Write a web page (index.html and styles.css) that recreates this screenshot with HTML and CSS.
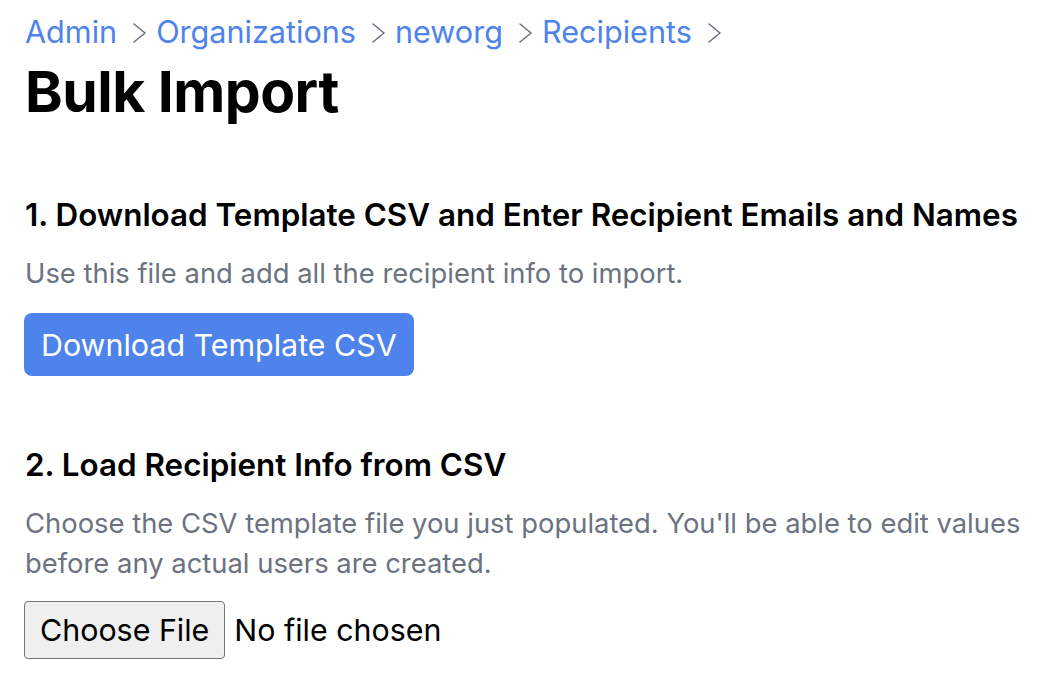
FILE: index.html
```html
<!DOCTYPE html>
<html lang="en">
<head>
<meta charset="utf-8">
<title>Bulk Import</title>
<link rel="stylesheet" href="styles.css">
</head>
<body>
<main class="page">
  <nav class="crumbs">
    <a href="#" class="crumb">Admin</a>
    <svg class="chev" viewBox="0 0 13 20" width="13" height="20"><path d="M1 1 L12 10 L1 19" /></svg>
    <a href="#" class="crumb">Organizations</a>
    <svg class="chev" viewBox="0 0 13 20" width="13" height="20"><path d="M1 1 L12 10 L1 19" /></svg>
    <a href="#" class="crumb">neworg</a>
    <svg class="chev" viewBox="0 0 13 20" width="13" height="20"><path d="M1 1 L12 10 L1 19" /></svg>
    <a href="#" class="crumb">Recipients</a>
    <svg class="chev" viewBox="0 0 13 20" width="13" height="20"><path d="M1 1 L12 10 L1 19" /></svg>
  </nav>
  <h1 class="title">Bulk Import</h1>

  <section class="step">
    <h2 class="step-title">1. Download Template CSV and Enter Recipient Emails and Names</h2>
    <p class="step-text">Use this file and add all the recipient info to import.</p>
    <button class="btn-primary" type="button">Download Template CSV</button>
  </section>

  <section class="step">
    <h2 class="step-title">2. Load Recipient Info from CSV</h2>
    <p class="step-text">Choose the CSV template file you just populated. You'll be able to edit values before any actual users are created.</p>
    <div class="file-row">
      <span class="file-btn">Choose File</span>
      <span class="file-name">No file chosen</span>
    </div>
  </section>
</main>
</body>
</html>
```
FILE: styles.css
```css
* { box-sizing: border-box; }
html, body { margin: 0; padding: 0; background: #ffffff; }
body {
  font-family: Inter, "Noto Sans", "Liberation Sans", sans-serif;
  color: #000;
}
.page {
  padding: 12px 24px 0 25px;
  display: flex;
  flex-direction: column;
}
.crumbs {
  display: flex;
  align-items: center;
  font-size: 30.6px;
  line-height: 40px;
}
.crumb {
  color: #4f83ec;
  text-decoration: none;
}
.chev {
  margin: 2px 10px 0 16px;
  fill: none;
  stroke: #6b7280;
  stroke-width: 1.6;
  stroke-linecap: round;
  stroke-linejoin: round;
}
.title {
  margin: 4px 0 0;
  font-size: 57px;
  line-height: 72px;
  font-weight: 700;
  letter-spacing: -0.5px;
}
.step {
  display: flex;
  flex-direction: column;
  align-items: flex-start;
}
.step:first-of-type { margin-top: 67px; }
.step + .step { margin-top: 69px; }
.step-title {
  margin: 0;
  font-size: 31.4px;
  line-height: 40px;
  font-weight: 600;
}
.step-text {
  margin: 18px 0 0;
  font-size: 27.4px;
  line-height: 40px;
  color: #6b7280;
  max-width: 1000px;
}
.btn-primary {
  margin-top: 20px;
  margin-left: -1px;
  height: 63px;
  padding: 0 17px;
  border: none;
  border-radius: 8px;
  background: #4f83ec;
  color: #fff;
  font-family: inherit;
  font-size: 30.4px;
}
.file-row {
  margin-top: 18px;
  margin-left: -1px;
  display: flex;
  align-items: center;
  font-size: 30.4px;
}
.file-btn {
  height: 58px;
  display: flex;
  align-items: center;
  padding: 0 15px;
  background: #efefef;
  border: 1px solid #767676;
  border-radius: 4px;
}
.file-name { margin-left: 9px; }
```
